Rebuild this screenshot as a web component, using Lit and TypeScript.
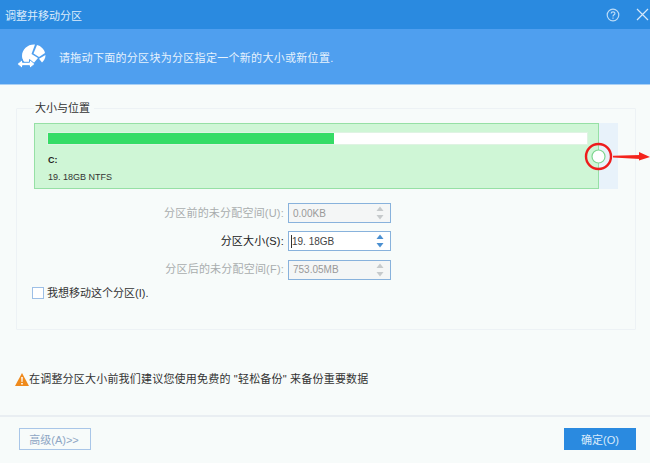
import { LitElement, html, css, svg } from "lit";
import { customElement } from "lit/decorators.js";

const spin = (on: boolean) => html`<span class="spin ${on ? "on" : ""}">
  <svg width="8" height="18" viewBox="0 0 8 18"><path d="M4 2.500 7.500 7H.5Z"/><path d="M4 15.500 .5 11h7Z"/></svg>
</span>`;

@customElement("app-root")
export class AppRoot extends LitElement {
  static styles = css`
    :host { display: block; width: 650px; height: 463px; overflow: hidden; font-family: "Liberation Sans", "Noto Sans CJK SC", sans-serif; font-size: 11px; color: #333; }
    .win { width: 650px; height: 463px; display: flex; flex-direction: column; background: #f7fbfa; position: relative; }
    .title { height: 29px; flex: none; background: #2a8ae0; color: #dcecfb; display: flex; align-items: center; padding: 0 1px 0 5px; font-size: 11px; }
    .title .t { flex: 1; }
    .title svg { display: block; }
    .title .help { margin-right: 16px; }
    .banner { height: 56px; flex: none; background: #4f9fef; color: #e6f2fd; display: flex; align-items: center; padding: 0 0 0 17px; gap: 12px; border-bottom: 1px solid #a9d0f5; box-sizing: border-box; letter-spacing: .3px; }
    .banner svg { display: block; margin-top: 1px; }
    .main { flex: 1; display: flex; flex-direction: column; padding: 16px 14px 0 16px; }
    fieldset { margin: 0; height: 229px; box-sizing: border-box; border: 1px solid #edf2f5; border-radius: 1px; padding: 8px 0 0 17px; min-width: 0; }
    legend { padding: 0 4px 0 1px; margin-left: 0; font-size: 11px; color: #333; line-height: 14px; }
    .track { width: 584px; height: 66px; background: #e8f2fa; }
    .part { width: 565px; height: 66px; box-sizing: border-box; background: #cff6d6; border: 1px solid #96e0a5; padding: 8px 10px 0 12px; }
    .bar { height: 13px; background: #fff; border: 1px solid #dff3e3; box-sizing: border-box; }
    .fill { height: 100%; background: #35dc66; }
    .drive { font-weight: bold; margin: 9px 0 0 1px; font-size: 9px; line-height: 12px; color: #222; }
    .size { font-size: 9px; line-height: 12px; margin: 5px 0 0 1px; color: #333; }
    .rows { display: grid; grid-template-columns: 250px 103px; grid-template-rows: 20px 20px 20px; row-gap: 8px; column-gap: 4px; margin-top: 14px; align-items: center; }
    .rows label { text-align: right; color: #a9adae; font-size: 11px; line-height: 19px; letter-spacing: .2px; }
    .rows label.on { color: #222; }
    .rows > .r3 { margin-top: 1px; }
    .input { height: 20px; box-sizing: border-box; border: 1px solid #88b2dc; background: #f4f6f6; display: flex; align-items: center; justify-content: space-between; padding: 0 0 0 4px; color: #999; font-size: 10px; }
    .input.on { background: #fff; color: #444; padding-left: 2px; }
    .caret { width: 1px; height: 13px; background: #333; margin-right: 0; }
    .val { flex: 1; }
    .spin { width: 14px; height: 18px; display: block; margin-right: 3px; }
    .spin svg { display: block; margin: 0 auto; fill: #c6cacc; }
    .spin.on svg { fill: #4a8fd0; }
    .check { display: flex; align-items: center; gap: 3px; color: #333; margin: 7px 0 0 -2px; line-height: 14px; }
    .box { width: 10px; height: 10px; border: 1px solid #9dbfe6; background: #fff; box-sizing: content-box; }
    .warn { display: flex; align-items: center; margin-top: 42px; margin-left: -1px; line-height: 14px; color: #333; height: 14px; letter-spacing: .2px; }
    .warn svg { display: block; flex: none; }
    .foot { height: 48px; flex: none; border-top: 2px solid #e9eef2; box-sizing: border-box; display: flex; justify-content: space-between; align-items: center; padding: 0 14px 3px 19px; }
    button { font: inherit; margin: 0; height: 22px; box-sizing: border-box; }
    .adv { width: 72px; background: #f7fbfa; border: 1px solid #a9c6e8; color: #8ea6c4; padding: 0 2px 0 0; }
    .ok { width: 72px; background: #2a8ae0; border: 1px solid #2a8ae0; color: #d9ebfb; }
    .mark { position: absolute; left: 584px; top: 142px; display: block; }
  `;

  render() {
    return html`<div class="win">
      <div class="title">
        <span class="t">调整并移动分区</span>
        <svg class="help" width="14" height="14" viewBox="0 0 14 14" fill="none" stroke="#bcdcf7" stroke-width="1.2">
          <circle cx="7" cy="7" r="5.8"/>
          <path d="M5.2 5.6C5.2 3.4 8.9 3.4 8.9 5.5 8.9 6.8 7 6.9 7 8.4"/><path d="M7 9.4v1.3"/>
        </svg>
        <svg width="13" height="13" viewBox="0 0 13 13" stroke="#d5e8fa" stroke-width="1.2"><path d="M1 1 12 12M12 1 1 12"/></svg>
      </div>
      <div class="banner">
        <svg width="30" height="30" viewBox="0 0 30 30" fill="#fff">
          <path d="M5 14C5 7 11 2 18 2.500L14.500 12 21 16 15 23C9 23 5 19 5 14Z"/>
          <path d="M20 3C24 4 27 7 28 11L22 15 16.500 11.500Z"/>
          <path d="M28.500 13C28.500 16 27 19 25 20.500L22 16.800Z"/>
          <path d="M0 22 5.500 17.500V20.300H12.500V17.500L18 22 12.500 26.500V23.700H5.500V26.500Z" stroke="#4f9fef" stroke-width="1"/>
        </svg>
        <span>请拖动下面的分区块为分区指定一个新的大小或新位置.</span>
      </div>
      <div class="main">
        <fieldset>
          <legend>大小与位置</legend>
          <div class="track">
            <div class="part">
              <div class="bar"><div class="fill" style="width:53%"></div></div>
              <div class="drive">C:</div>
              <div class="size">19. 18GB NTFS</div>
            </div>
          </div>
          <div class="rows">
            <label>分区前的未分配空间(U):</label>
            <div class="input"><span class="val">0.00KB</span>${spin(false)}</div>
            <label class="on">分区大小(S):</label>
            <div class="input on"><span class="caret"></span><span class="val">19. 18GB</span>${spin(true)}</div>
            <label class="r3">分区后的未分配空间(F):</label>
            <div class="input r3"><span class="val">753.05MB</span>${spin(false)}</div>
          </div>
          <div class="check"><span class="box"></span><span>我想移动这个分区(I).</span></div>
        </fieldset>
        <div class="warn">
          <svg width="14" height="13" viewBox="0 0 14 13">
            <path d="M7 0 14 13H0Z" fill="#ef8a1c"/>
            <path d="M6.200 4h1.600l-.3 5h-1zM6.200 10h1.600v1.500H6.200z" fill="#fff"/>
          </svg>
          <span>在调整分区大小前我们建议您使用免费的 "轻松备份" 来备份重要数据</span>
        </div>
      </div>
      <div class="foot">
        <button class="adv">高级(A)>></button>
        <button class="ok">确定(O)</button>
      </div>
      <svg class="mark" width="66" height="30" viewBox="0 0 66 30" fill="none">
        ${svg`<line x1="14.500" y1="0" x2="14.500" y2="28" stroke="#96e0a5"/>
        <circle cx="14.500" cy="14.500" r="6.500" fill="#fff" stroke="#7fd690" stroke-width="1.200"/>
        <circle cx="14.500" cy="14.500" r="12.500" stroke="#ee1c1c" stroke-width="2.400"/>
        <path d="M29 13.800 56 13V17L29 15.600Z" fill="#f4241c"/>
        <path d="M55 10 66 15 55 18.500Z" fill="#f4241c"/>`}
      </svg>
    </div>`;
  }
}
